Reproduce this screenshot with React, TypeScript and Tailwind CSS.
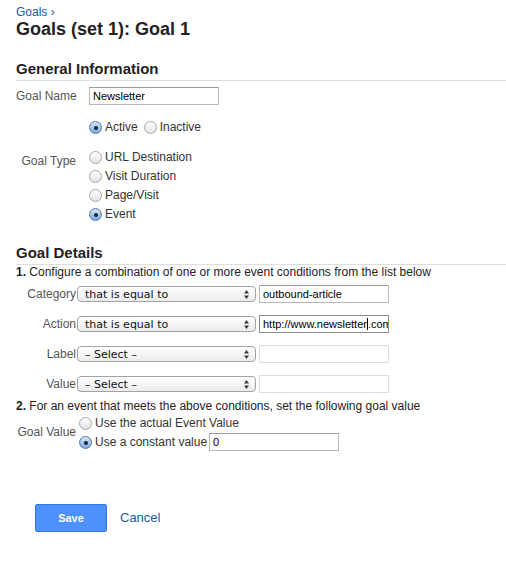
import React from "react";

const label = "text-[12px] text-[#555] whitespace-nowrap";

function Radio({ checked = false }: { checked?: boolean }) {
  return (
    <span
      className={`relative inline-block h-[13px] w-[13px] shrink-0 translate-y-[1px] rounded-full border ${
        checked
          ? "border-[#55799f] bg-linear-to-b from-[#d4e6f8] to-[#78abe0]"
          : "border-[#a8a8a8] bg-linear-to-b from-white to-[#e2e2e2]"
      }`}
    >
      {checked && (
        <span className="absolute left-1/2 top-1/2 h-[4px] w-[4px] -translate-x-1/2 -translate-y-1/2 rounded-full bg-[#18222c]" />
      )}
    </span>
  );
}

function Option({ checked, text }: { checked?: boolean; text: string }) {
  return (
    <span className="flex items-center gap-[3px] text-[12px] text-[#333]">
      <Radio checked={checked} />
      <span>{text}</span>
    </span>
  );
}

function Select({ value }: { value: string }) {
  return (
    <div className="flex h-[16px] w-[179px] items-center justify-between rounded-[4px] border border-[#a3a3a3] bg-linear-to-b from-white to-[#ebebeb] pl-[7px] pr-[6px] font-['DejaVu_Sans',sans-serif] text-[11px] leading-none text-[#111]">
      <span>{value}</span>
      <svg width="5" height="9" viewBox="0 0 5 9">
        <path d="M2.5 0 5 3.5H0Z M0 5.5h5L2.5 9Z" fill="#3a3a3a" />
      </svg>
    </div>
  );
}

function TextBox({ children, dim, focus }: { children?: React.ReactNode; dim?: boolean; focus?: boolean }) {
  return (
    <div
      className={`h-[18px] w-[130px] overflow-hidden whitespace-nowrap border bg-white px-[3px] text-[11px] leading-[16px] text-black ${
        dim ? "border-[#dedede]" : focus ? "border-[#8a8a8a]" : "border-[#b8b8b8] border-t-[#9a9a9a]"
      }`}
    >
      {children}
    </div>
  );
}

const conditions = [
  { name: "Category", op: "that is equal to", value: "outbound-article" },
  { name: "Action", op: "that is equal to", value: "action" },
  { name: "Label", op: "– Select –", value: "" },
  { name: "Value", op: "– Select –", value: "" },
];

export default function App() {
  return (
    <div className="min-h-[568px] w-[506px] bg-white pl-4 pt-[5px] font-['Liberation_Sans',Arial,sans-serif] text-[#222]">
      <div className="text-[12px] leading-[14px] text-[#1a5aa6]">Goals ›</div>
      <h1 className="text-[18px] font-bold leading-[20px]">Goals (set 1): Goal 1</h1>

      {/* General information */}
      <h2 className="mt-[21px] border-b border-[#dddddd] pb-[2px] text-[15px] font-bold leading-[18px]">
        General Information
      </h2>
      <div className="mt-[6px] flex items-center">
        <span className={`${label} w-[60px] text-right`}>Goal Name</span>
        <div className="ml-[13px]">
          <TextBox>Newsletter</TextBox>
        </div>
      </div>

      <div className="ml-[73px] mt-[12px] flex h-[19px] items-center gap-[6px]">
        <Option checked text="Active" />
        <Option text="Inactive" />
      </div>

      <div className="mt-[11px] flex items-start">
        <span className={`${label} mt-[5px] w-[60px] text-right`}>Goal Type</span>
        <div className="ml-[13px] flex flex-col">
          {["URL Destination", "Visit Duration", "Page/Visit", "Event"].map((t) => (
            <div key={t} className="flex h-[19px] items-center">
              <Option checked={t === "Event"} text={t} />
            </div>
          ))}
        </div>
      </div>

      {/* Goal details */}
      <h2 className="mt-[21px] border-b border-[#dddddd] pb-[2px] text-[15px] font-bold leading-[18px]">
        Goal Details
      </h2>
      <p className="text-[12px] leading-[14px] text-[#222]">
        <b>1.</b> Configure a combination of one or more event conditions from the list below
      </p>
      <div className="flex flex-col">
        {conditions.map((c) => (
          <div key={c.name} className="flex h-[30px] items-center">
            <span className={`${label} w-[60px] text-right`}>{c.name}</span>
            <div className="ml-px">
              <Select value={c.op} />
            </div>
            <div className="ml-[3px]">
              {c.name === "Action" ? (
                <TextBox focus>
                  http://www.newsletter
                  <span className="inline-block h-[12px] w-px translate-y-[2px] bg-black" />
                  .com
                </TextBox>
              ) : (
                <TextBox dim={!c.value}>{c.value}</TextBox>
              )}
            </div>
          </div>
        ))}
      </div>

      <p className="text-[12px] leading-[14px] text-[#222]">
        <b>2.</b> For an event that meets the above conditions, set the following goal value
      </p>
      <div className="flex items-center">
        <span className={`${label} w-[60px] text-right`}>Goal Value</span>
        <div className="ml-[3px] flex flex-col">
          <div className="flex h-[19px] items-center">
            <Option text="Use the actual Event Value" />
          </div>
          <div className="flex h-[19px] items-center gap-[2px]">
            <Option checked text="Use a constant value" />
            <TextBox>0</TextBox>
          </div>
        </div>
      </div>

      <div className="ml-[19px] mt-[53px] flex items-center gap-[13px]">
        <button className="h-[28px] w-[72px] rounded-[2px] border border-[#3079ed] bg-[#4d90fe] text-[11px] font-bold text-white">
          Save
        </button>
        <span className="text-[13px] text-[#1a5aa6]">Cancel</span>
      </div>
    </div>
  );
}
